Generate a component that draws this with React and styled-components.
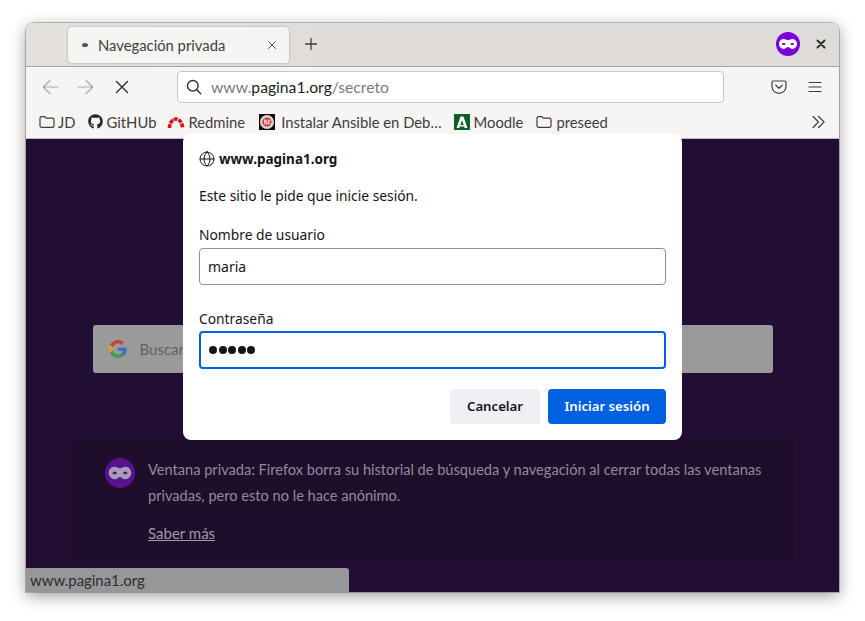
import React from 'react';
import styled, { createGlobalStyle } from 'styled-components';
import { FaGithub } from 'react-icons/fa';

const Global = createGlobalStyle`
  html, body { margin: 0; padding: 0; background: #fff; }
  body { font-family: "Noto Sans", "Open Sans", sans-serif; width: 865px; height: 621px; overflow: hidden; }
  * { box-sizing: border-box; }
`;
const chrome = `"Lato", "Noto Sans", sans-serif`;
const Page = styled.div`
  width: 865px;
  height: 621px;
  padding: 23px 26px 29px;
`;
const Window = styled.div`
  position: relative;
  width: 813px;
  height: 569px;
  border-radius: 8px 8px 0 0;
  display: flex;
  flex-direction: column;
  box-shadow: 0 0 0 1px rgba(0,0,0,.22), 0 4px 16px rgba(0,0,0,.38);
`;
const TabBar = styled.div`
  height: 44px;
  flex: none;
  background: linear-gradient(90deg, #e4e1dd, #dfdbd8 50%);
  border-radius: 8px 8px 0 0;
  border-bottom: 1px solid #a8a6a3;
  display: flex;
  align-items: center;
  padding: 0 0 1px 42px;
`;
const Tab = styled.div`
  width: 221px;
  height: 36px;
  margin-top: 1px;
  background: #f6f5f4;
  border-radius: 4px;
  box-shadow: 0 0 2px rgba(0,0,0,.35);
  display: flex;
  align-items: center;
  padding: 0 10px 0 14px;
  font-family: ${chrome};
  font-size: 14.8px;
  color: #3d3d40;
`;
const TabDot = styled.span`
  width: 6px;
  height: 4px;
  border-radius: 50%;
  background: #55555a;
  margin-right: 10px;
  flex: none;
`;
const TabTitle = styled.span`
  flex: 1;
  white-space: nowrap;
`;
const PlusBtn = styled.span`
  margin-left: 14px;
  display: flex;
`;
const TabRight = styled.div`
  margin-left: auto;
  display: flex;
  align-items: center;
  gap: 13px;
  padding-right: 10px;
`;
const NavBar = styled.div`
  height: 38px;
  flex: none;
  background: #f6f5f4;
  display: flex;
  align-items: center;
  padding: 2px 16px 0 15px;
`;
const NavIcon = styled.span`
  display: flex;
  width: 18px;
  justify-content: center;
  margin-right: ${p => p.$gap || 0}px;
`;
const UrlBar = styled.div`
  width: 547px;
  height: 32px;
  background: #fff;
  border: 1px solid #c9c7c5;
  border-radius: 4px;
  display: flex;
  align-items: center;
  padding: 0 10px 0 8px;
  font-family: ${chrome};
  font-size: 15.7px;
  color: #7a7a7e;
  margin-right: 47px;
`;
const UrlText = styled.span`
  margin-left: 9px;
  white-space: nowrap;
`;
const UrlHost = styled.span`
  color: #1c1b22;
`;
const NavRight = styled.div`
  display: flex;
  align-items: center;
  gap: 20px;
`;
const BookmarkBar = styled.div`
  height: 34px;
  flex: none;
  background: #f6f5f4;
  border-bottom: 1px solid #bdbbb9;
  display: flex;
  align-items: center;
  padding: 0 13px;
  font-family: ${chrome};
  font-size: 14.8px;
  color: #3d3d40;
`;
const Bookmark = styled.div`
  display: flex;
  align-items: center;
  gap: ${p => p.$gap ?? 4}px;
  white-space: nowrap;
  margin-right: ${p => p.$mr ?? 12}px;
`;
const Overflow = styled.span`
  margin-left: auto;
  display: flex;
`;
const Content = styled.div`
  flex: 1;
  background: #220d33;
  display: flex;
  flex-direction: column;
  align-items: center;
`;
const SearchBox = styled.div`
  width: 680px;
  height: 48px;
  margin-top: 186px;
  flex: none;
  background: #9a9a9b;
  border-radius: 3px;
  display: flex;
  align-items: center;
  padding-left: 16px;
  gap: 13px;
  font-family: ${chrome};
  font-size: 15px;
  color: #616164;
`;
const PrivateCard = styled.div`
  width: 723px;
  height: 124px;
  margin-top: 65px;
  flex: none;
  background: #1e0e2b;
  border-radius: 6px;
  display: flex;
  padding: 20px 24px 0 34px;
  gap: 13px;
  color: #93899b;
  font-family: ${chrome};
  font-size: 14.6px;
  line-height: 26px;
`;
const MaskSlot = styled.span`
  flex: none;
  display: flex;
  height: 30px;
`;
const CardText = styled.div`
  margin-top: -1px;
`;
const CardLink = styled.a`
  display: block;
  margin-top: 11px;
  font-size: 15px;
  color: #a096a8;
  text-decoration: underline;
`;
const StatusBar = styled.div`
  position: absolute;
  left: 0;
  bottom: 0;
  width: 323px;
  height: 24px;
  background: #979698;
  border-radius: 0 3px 0 0;
  padding: 0 4px;
  font-family: ${chrome};
  font-size: 14.9px;
  line-height: 24px;
  color: #2e2e31;
`;
const Dialog = styled.div`
  position: absolute;
  left: 157px;
  top: 111px;
  width: 499px;
  height: 306px;
  background: #fff;
  border-radius: 8px;
  padding: 14px 16px 0;
  display: flex;
  flex-direction: column;
  color: #15141a;
  font-size: 13.8px;
`;
const DialogHost = styled.div`
  display: flex;
  align-items: center;
  gap: 4px;
  font-weight: 700;
  font-size: 13.5px;
  height: 22px;
`;
const Message = styled.div`
  margin-top: 15px;
  height: 22px;
  line-height: 22px;
`;
const Label = styled.div`
  margin-top: ${p => p.$mt}px;
  height: 20px;
  line-height: 20px;
`;
const Field = styled.div`
  margin-top: ${p => (p.$focus ? 2 : 3)}px;
  height: ${p => (p.$focus ? 38 : 37)}px;
  border-radius: 4px;
  background: #fff;
  border: ${p => (p.$focus ? '2px solid #0060df' : '1px solid #8f8f9d')};
  display: flex;
  align-items: center;
  padding-left: 8px;
  font-size: 14px;
`;
const Dots = styled.span`
  display: flex;
  gap: 1.5px;
`;
const Dot = styled.span`
  width: 8px;
  height: 8px;
  border-radius: 50%;
  background: #15141a;
`;
const Actions = styled.div`
  margin-top: 20px;
  display: flex;
  justify-content: flex-end;
  gap: 8px;
`;
const Button = styled.div`
  height: 35px;
  width: ${p => p.$w}px;
  border-radius: 4px;
  display: flex;
  align-items: center;
  justify-content: center;
  font-weight: 600;
  font-size: 13.2px;
  padding-bottom: 1px;
  background: ${p => (p.$primary ? '#0060df' : '#f0f0f4')};
  color: ${p => (p.$primary ? '#fff' : '#15141a')};
`;

const Line = ({ d, c = '#3d3d40', w = 1.3, s = 16 }) => (
  <svg width={s} height={s} viewBox="0 0 16 16" fill="none" stroke={c} strokeWidth={w} strokeLinecap="round" strokeLinejoin="round"><path d={d} /></svg>
);
const Folder = () => (
  <svg width="16" height="16" viewBox="0 0 16 16" fill="none" stroke="#3d3d40" strokeWidth="1.2"><path d="M1 4.200c0-1 .6-1.600 1.500-1.600h3.200l1.700 1.600h6c.9 0 1.600.6 1.600 1.500v6.100c0 .9-.7 1.600-1.600 1.600H2.600c-.9 0-1.600-.7-1.600-1.600z" /></svg>
);
const Redmine = () => (
  <svg width="18" height="14" viewBox="0 0 18 14">
    <path d="M2.500 13A6.500 9 0 0 1 15.500 13" fill="none" stroke="#d3141a" strokeWidth="3.600" strokeDasharray="4 .9" />
  </svg>
);
const Ansible = () => (
  <svg width="16" height="16" viewBox="0 0 16 16">
    <rect width="16" height="16" fill="#0c0c0c" />
    <circle cx="8" cy="8" r="7" fill="#d9d5d5" />
    <circle cx="8" cy="8" r="4.600" fill="#d8343c" />
    <path d="M5.600 10.600V5.600l2.200 5V5.600M9.600 5.600v5M12 5.600L9.600 8l2.400 2.600" stroke="#fff" strokeWidth=".8" fill="none" />
  </svg>
);
const Moodle = () => (
  <svg width="16" height="16" viewBox="0 0 16 16">
    <rect width="16" height="16" fill="#0d5f24" />
    <path d="M2.500 14L6.600 2.500h2.800L13.500 14h-2.800L8 6.200 5.300 14z" fill="#fff" />
    <path d="M6.400 11h3.200l.6 1.600H5.800z" fill="#fff" />
  </svg>
);
const Mask = ({ size, bg, fg }) => (
  <svg width={size} height={size} viewBox="0 0 24 24">
    <circle cx="12" cy="12" r="12" fill={bg} />
    <path fillRule="evenodd" fill={fg} d="M7.600 7c1.800 0 3 1.100 4.400 1.100S14.600 7 16.400 7c2.600 0 4.600 2.200 4.600 4.800 0 2.800-2.100 5.200-4.800 5.200-1.900 0-3-1.900-4.200-1.900S9.700 17 7.800 17C5.100 17 3 14.600 3 11.800 3 9.200 5 7 7.600 7zM6 12c0 .7.800 1.100 1.800 1.100s1.700-.4 1.700-1.100-.7-1-1.700-1S6 11.300 6 12zM14.500 12c0 .7.700 1.100 1.700 1.100S18 12.700 18 12s-.8-1-1.800-1-1.700.3-1.700 1z" />
  </svg>
);
const GoogleG = () => (
  <svg width="18" height="18" viewBox="0 0 48 48">
    <path fill="#c8423a" d="M24 9.500c3.500 0 6.700 1.200 9.200 3.600l6.900-6.900C35.900 2.400 30.500 0 24 0 14.600 0 6.500 5.400 2.600 13.200l8 6.200C12.400 13.700 17.700 9.500 24 9.500z" />
    <path fill="#3f6fc0" d="M46.900 24.500c0-1.600-.1-3.100-.4-4.500H24v9h12.900c-.6 3-2.200 5.500-4.700 7.200l7.700 6c4.500-4.200 7-10.300 7-17.700z" />
    <path fill="#d6a62a" d="M10.500 28.600c-.5-1.400-.8-3-.8-4.600s.3-3.200.8-4.600l-8-6.200C.9 16.500 0 20.100 0 24s.9 7.500 2.600 10.800z" />
    <path fill="#3e9a50" d="M24 48c6.500 0 11.900-2.100 15.900-5.800l-7.700-6c-2.200 1.400-4.900 2.300-8.200 2.300-6.300 0-11.600-4.200-13.500-9.900l-8 6.200C6.500 42.600 14.600 48 24 48z" />
  </svg>
);

export default function App() {
  return (
    <Page>
      <Global />
      <Window>
        <TabBar>
          <Tab>
            <TabDot />
            <TabTitle>Navegación privada</TabTitle>
            <Line d="M4 4l8 8M12 4l-8 8" s={14} w={1.1} c="#4a4a4f" />
          </Tab>
          <PlusBtn><Line d="M8 2.500v11M2.500 8h11" w={1.3} /></PlusBtn>
          <TabRight>
            <Mask size={24} bg="#7b00db" fg="#fff" />
            <Line d="M4.500 4.500l7 7M11.500 4.500l-7 7" s={16} w={2} c="#2e3436" />
          </TabRight>
        </TabBar>
        <NavBar>
          <NavIcon $gap={18}><Line d="M15 8H2M8 2.200L2 8l6 5.800" s={18} w={1.1} c="#a9a9ab" /></NavIcon>
          <NavIcon $gap={18}><Line d="M1 8h13M8 2.200L14 8l-6 5.800" s={18} w={1.1} c="#a9a9ab" /></NavIcon>
          <NavIcon $gap={46}><Line d="M2.500 2.500l11 11M13.500 2.500l-11 11" s={16} w={1.4} c="#2e2e31" /></NavIcon>
          <UrlBar>
            <Line d="M6.800 1.500a5.300 5.300 0 1 0 0 10.600a5.300 5.300 0 1 0 0-10.600zM10.700 10.700l4 4" s={16} w={1.4} c="#2e2e31" />
            <UrlText>www.<UrlHost>pagina1.org</UrlHost>/secreto</UrlText>
          </UrlBar>
          <NavRight>
            <Line d="M2.300 2h11.400c.8 0 1.300.5 1.300 1.300v4.200c0 3.900-3.100 6.800-7 6.800s-7-2.900-7-6.800V3.300C1 2.500 1.500 2 2.300 2zM4.800 6.200L8 9.300l3.200-3.100" s={16} w={1.2} />
            <Line d="M2 3.500h12M2 8h12M2 12.500h12" s={16} w={1.2} />
          </NavRight>
        </NavBar>
        <BookmarkBar>
          <Bookmark $mr={12} $gap={3}><Folder />JD</Bookmark>
          <Bookmark $mr={11} $gap={4}><FaGithub size={15} color="#26262a" />GitHUb</Bookmark>
          <Bookmark $mr={14} $gap={3}><Redmine />Redmine</Bookmark>
          <Bookmark $mr={12} $gap={6}><Ansible />Instalar Ansible en Deb…</Bookmark>
          <Bookmark $mr={13} $gap={4}><Moodle />Moodle</Bookmark>
          <Bookmark $gap={4}><Folder />preseed</Bookmark>
          <Overflow><Line d="M3 2.500L8.500 8L3 13.500M8.500 2.500L14 8l-5.500 5.500" s={16} w={1.2} /></Overflow>
        </BookmarkBar>
        <Content>
          <SearchBox><GoogleG />Buscar</SearchBox>
          <PrivateCard>
            <MaskSlot><Mask size={30} bg="#57128f" fg="#a99fb5" /></MaskSlot>
            <CardText>
              Ventana privada: Firefox borra su historial de búsqueda y navegación al cerrar todas las ventanas privadas, pero esto no le hace anónimo.
              <CardLink>Saber más</CardLink>
            </CardText>
          </PrivateCard>
        </Content>
        <StatusBar>www.pagina1.org</StatusBar>
        <Dialog>
          <DialogHost>
            <Line d="M8 1a7 7 0 1 0 0 14a7 7 0 1 0 0-14zM8 1c-4 3.500-4 10.500 0 14c4-3.500 4-10.500 0-14zM1 8h14" s={16} w={1} c="#15141a" />
            www.pagina1.org
          </DialogHost>
          <Message>Este sitio le pide que inicie sesión.</Message>
          <Label $mt={18}>Nombre de usuario</Label>
          <Field>maria</Field>
          <Label $mt={24}>Contraseña</Label>
          <Field $focus><Dots><Dot /><Dot /><Dot /><Dot /><Dot /></Dots></Field>
          <Actions>
            <Button $w={90}>Cancelar</Button>
            <Button $w={118} $primary>Iniciar sesión</Button>
          </Actions>
        </Dialog>
      </Window>
    </Page>
  );
}
